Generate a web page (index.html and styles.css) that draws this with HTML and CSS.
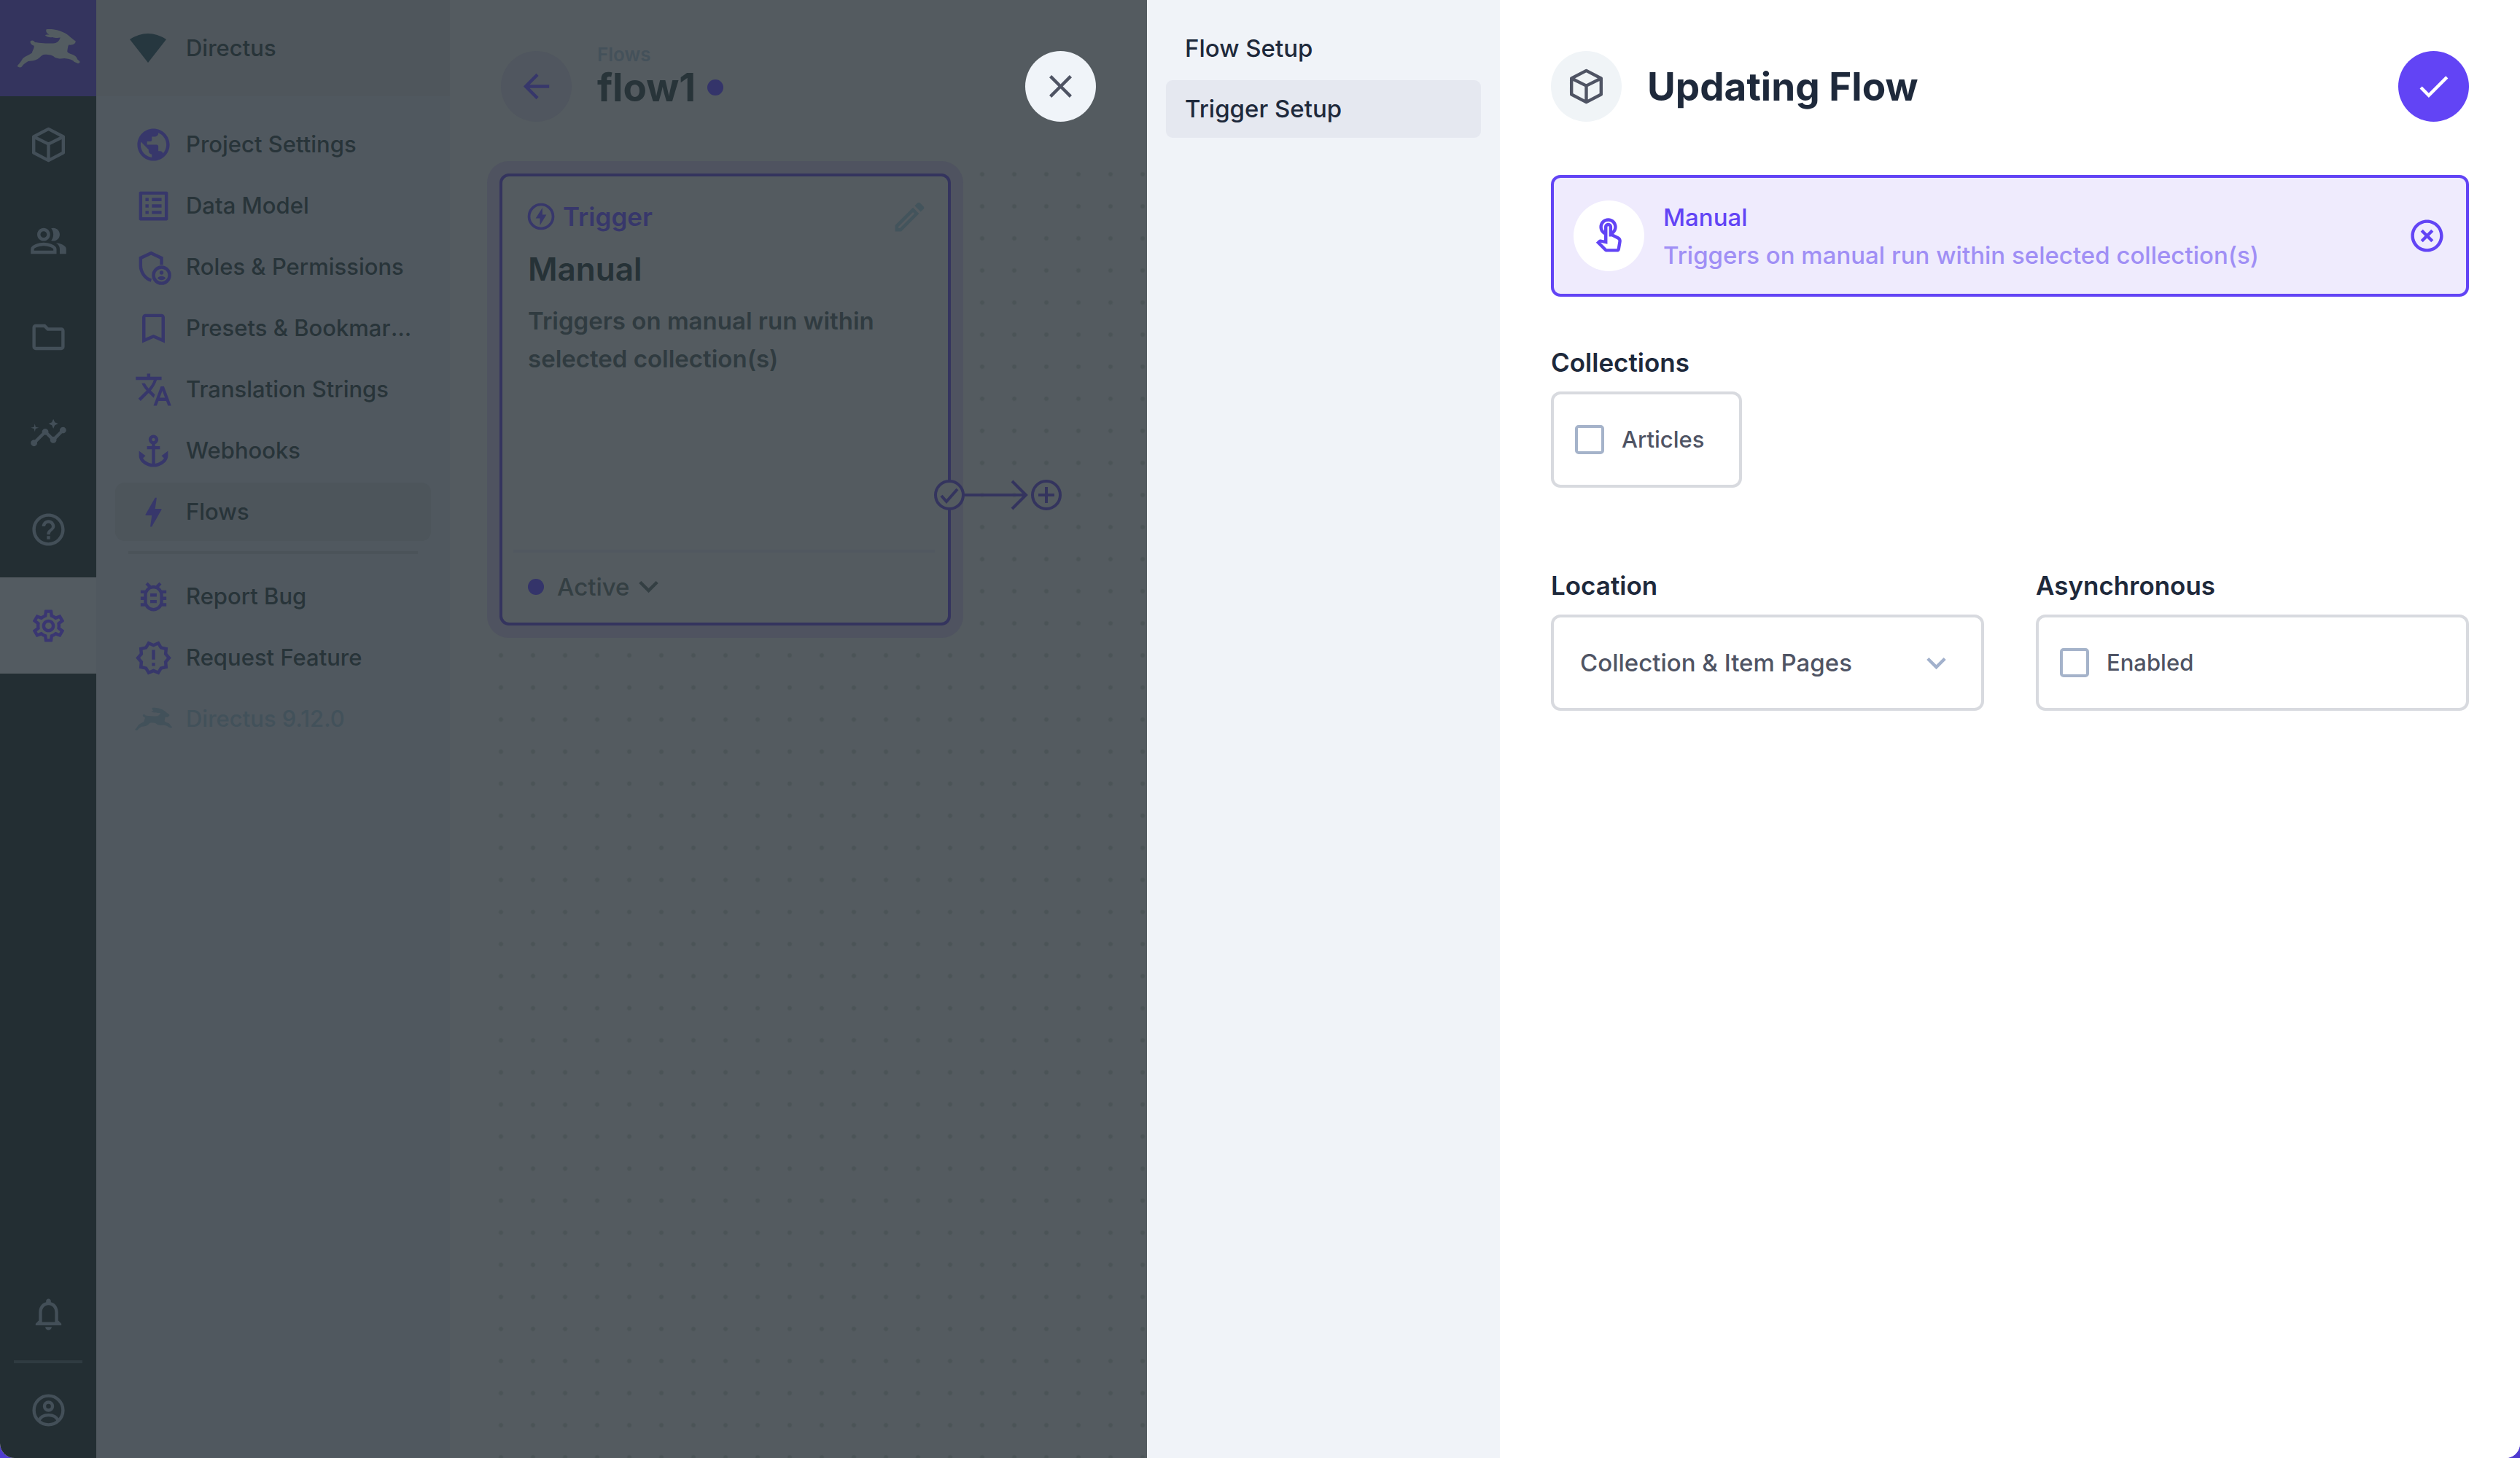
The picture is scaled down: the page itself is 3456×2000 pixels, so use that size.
FILE: index.html
```html
<!DOCTYPE html>
<html lang="en">
<head>
<meta charset="utf-8">
<title>Updating Flow</title>
<link rel="stylesheet" href="styles.css">
</head>
<body>
<svg class="sprite" aria-hidden="true">
  <symbol id="rabbit" viewBox="20 44 272 166"><path d="M147 48C165 44 200 50 222 62C245 75 250 85 268 96C270 106 258 114 240 112C236 118 236 125 234 137C232 142 238 146 248 150C262 154 272 160 276 172L285 180C288 186 282 190 276 188L262 182C252 170 235 171 222 168C208 170 195 170 182 164C172 154 158 153 142 152C132 152 126 158 120 164C108 176 90 178 72 180C58 188 50 195 46 202C42 208 28 206 27 199C38 188 44 178 50 168C62 158 78 152 88 145C90 135 98 125 96 116C84 112 78 102 82 96C88 91 96 94 100 101C120 104 150 106 175 106C190 106 200 98 205 82C196 84 182 84 172 80C162 82 148 80 142 72C146 68 152 70 160 70C150 66 144 58 147 48Z"/></symbol>
  <symbol id="box" viewBox="0 0 24 24"><path d="M12 2.2 21.2 7v10L12 21.8 2.8 17V7zM2.8 7 12 11.6 21.2 7M12 11.6v10.2" fill="none" stroke="currentColor" stroke-width="2" stroke-linejoin="round"/></symbol>
  <symbol id="expand" viewBox="0 0 24 24"><path d="M7.41 8.59 12 13.17l4.59-4.58L18 10l-6 6-6-6z"/></symbol>
</svg>
<div class="app">
  <nav class="modules" aria-label="Modules">
    <a class="module logo" href="#" aria-label="Directus"><svg><use href="#rabbit"/></svg></a>
    <a class="module" href="#" aria-label="Content"><svg class="icon"><use href="#box"/></svg></a>
    <a class="module" href="#" aria-label="Users"><svg class="icon" viewBox="0 0 24 24"><path d="M16.67 13.13C18.04 14.06 19 15.32 19 17v3h4v-3c0-2.18-3.57-3.47-6.33-3.87zM15 12c2.21 0 4-1.79 4-4s-1.79-4-4-4c-.47 0-.91.1-1.33.24C14.5 5.27 15 6.58 15 8s-.5 2.73-1.33 3.76c.42.14.86.24 1.33.24zM9 12c2.21 0 4-1.79 4-4s-1.79-4-4-4-4 1.79-4 4 1.79 4 4 4zm0-6c1.1 0 2 .9 2 2s-.9 2-2 2-2-.9-2-2 .9-2 2-2zm0 7c-2.67 0-8 1.34-8 4v3h16v-3c0-2.66-5.33-4-8-4zm6 5H3v-.99C3.2 16.29 6.3 15 9 15s5.8 1.29 6 2v1z"/></svg></a>
    <a class="module" href="#" aria-label="Files"><svg class="icon" viewBox="0 0 24 24"><path d="M9.17 6l2 2H20v10H4V6h5.17M10 4H4c-1.1 0-1.99.9-1.99 2L2 18c0 1.1.9 2 2 2h16c1.1 0 2-.9 2-2V8c0-1.1-.9-2-2-2h-8l-2-2z"/></svg></a>
    <a class="module" href="#" aria-label="Insights"><svg class="icon" viewBox="0 0 24 24"><path d="M21 8c-1.45 0-2.26 1.44-1.93 2.51l-3.55 3.56c-.3-.09-.74-.09-1.04 0l-2.55-2.55C12.27 10.45 11.46 9 10 9c-1.45 0-2.27 1.44-1.93 2.52l-4.56 4.55C2.44 15.74 1 16.55 1 18c0 1.1.9 2 2 2 1.45 0 2.26-1.44 1.93-2.51l4.55-4.56c.3.09.74.09 1.04 0l2.55 2.55C12.73 16.55 13.54 18 15 18c1.45 0 2.27-1.44 1.93-2.52l3.56-3.55C21.56 12.26 23 11.45 23 10c0-1.1-.9-2-2-2zM15 9l.94-2.07L18 6l-2.06-.93L15 3l-.92 2.07L12 6l2.08.93zM3.5 11L4 9l2-.5L4 8l-.5-2L3 8l-2 .5L3 9z"/></svg></a>
    <a class="module" href="#" aria-label="Documentation"><svg class="icon" viewBox="0 0 24 24"><path d="M11 18h2v-2h-2v2zm1-16C6.48 2 2 6.48 2 12s4.48 10 10 10 10-4.48 10-10S17.52 2 12 2zm0 18c-4.41 0-8-3.59-8-8s3.59-8 8-8 8 3.59 8 8-3.59 8-8 8zm0-14c-2.21 0-4 1.79-4 4h2c0-1.1.9-2 2-2s2 .9 2 2c0 2-3 1.75-3 5h2c0-2.25 3-2.5 3-5 0-2.21-1.79-4-4-4z"/></svg></a>
    <a class="module current" href="#" aria-label="Settings"><svg class="icon" viewBox="0 0 24 24"><path d="M19.43 12.98c.04-.32.07-.64.07-.98s-.03-.66-.07-.98l2.11-1.65c.19-.15.24-.42.12-.64l-2-3.46c-.09-.16-.26-.25-.44-.25-.06 0-.12.01-.17.03l-2.49 1c-.52-.4-1.08-.73-1.69-.98l-.38-2.65C14.46 2.18 14.25 2 14 2h-4c-.25 0-.46.18-.49.42l-.38 2.65c-.61.25-1.17.59-1.69.98l-2.49-1c-.06-.02-.12-.03-.18-.03-.17 0-.34.09-.43.25l-2 3.46c-.13.22-.07.49.12.64l2.11 1.65c-.04.32-.07.65-.07.98s.03.66.07.98l-2.11 1.65c-.19.15-.24.42-.12.64l2 3.46c.09.16.26.25.44.25.06 0 .12-.01.17-.03l2.49-1c.52.4 1.08.73 1.69.98l.38 2.65c.03.24.24.42.49.42h4c.25 0 .46-.18.49-.42l.38-2.65c.61-.25 1.17-.59 1.69-.98l2.49 1c.06.02.12.03.18.03.17 0 .34-.09.43-.25l2-3.46c.12-.22.07-.49-.12-.64l-2.11-1.65zm-1.98-1.71c.04.31.05.52.05.73 0 .21-.02.43-.05.73l-.14 1.13.89.7 1.08.84-.7 1.21-1.27-.51-1.04-.42-.9.68c-.43.32-.84.56-1.25.73l-1.06.43-.16 1.13-.2 1.35h-1.4l-.19-1.35-.16-1.13-1.06-.43c-.43-.18-.83-.41-1.23-.71l-.91-.7-1.06.43-1.27.51-.7-1.21 1.08-.84.89-.7-.14-1.13c-.03-.31-.05-.54-.05-.74s.02-.43.05-.73l.14-1.13-.89-.7-1.08-.84.7-1.21 1.27.51 1.04.42.9-.68c.43-.32.84-.56 1.25-.73l1.06-.43.16-1.13.2-1.35h1.39l.19 1.35.16 1.13 1.06.43c.43.18.83.41 1.23.71l.91.7 1.06-.43 1.27-.51.7 1.21-1.07.85-.89.7.14 1.13zM12 8c-2.21 0-4 1.79-4 4s1.79 4 4 4 4-1.79 4-4-1.79-4-4-4zm0 6c-1.1 0-2-.9-2-2s.9-2 2-2 2 .9 2 2-.9 2-2 2z"/></svg></a>
    <button class="module bottom" type="button" aria-label="Notifications"><svg class="icon" viewBox="0 0 24 24"><path d="M12 22c1.1 0 2-.9 2-2h-4c0 1.1.9 2 2 2zm6-6v-5c0-3.07-1.63-5.64-4.5-6.32V4c0-.83-.67-1.5-1.5-1.5s-1.5.67-1.5 1.5v.68C7.64 5.36 6 7.92 6 11v5l-2 2v1h16v-1l-2-2zm-2 1H8v-6c0-2.48 1.51-4.5 4-4.5s4 2.02 4 4.5v6z"/></svg></button>
    <hr class="module-rule">
    <a class="module" href="#" aria-label="Account"><svg class="icon" viewBox="0 0 24 24"><g fill="none" stroke="currentColor" stroke-width="2"><circle cx="12" cy="12" r="9"/><circle cx="12" cy="9.5" r="2.5"/><path d="M6 18.5c1-2.4 3.3-3.5 6-3.5s5 1.1 6 3.5"/></g></svg></a>
  </nav>

  <nav class="settings" aria-label="Settings">
    <header class="project">
      <svg class="project-logo" viewBox="0 0 52 40"><path d="M1 8Q26-8 51 8L26 40z"/></svg>
      <span>Directus</span>
    </header>
    <div class="links">
      <a class="link" href="#"><svg class="icon" viewBox="0 0 24 24"><path d="M12 2C6.48 2 2 6.48 2 12s4.48 10 10 10 10-4.48 10-10S17.52 2 12 2zM4 12c0-.61.08-1.21.21-1.78L8.99 15v1c0 1.1.9 2 2 2v1.93C7.06 19.43 4 16.07 4 12zm13.89 5.4c-.26-.81-1-1.4-1.9-1.4h-1v-3c0-.55-.45-1-1-1h-6v-2h2c.55 0 1-.45 1-1V7h2c1.1 0 2-.9 2-2v-.41C17.92 5.77 20 8.65 20 12c0 2.08-.81 3.98-2.11 5.4z"/></svg><span>Project Settings</span></a>
      <a class="link" href="#"><svg class="icon" viewBox="0 0 24 24"><path d="M11 7h6v2h-6zm0 4h6v2h-6zm0 4h6v2h-6zM7 7h2v2H7zm0 4h2v2H7zm0 4h2v2H7zM20.1 3H3.9c-.5 0-.9.4-.9.9v16.2c0 .4.4.9.9.9h16.2c.4 0 .9-.5.9-.9V3.9c0-.5-.5-.9-.9-.9zM19 19H5V5h14v14z"/></svg><span>Data Model</span></a>
      <a class="link" href="#"><svg class="icon" viewBox="0 0 24 24"><g fill="none" stroke="currentColor" stroke-width="2"><path d="M17 10.5V6.3L10.5 3.3 4 6.3v4.6c0 4.3 2.8 8.2 6.6 9.3"/><circle cx="17" cy="17" r="5"/></g><circle cx="17" cy="15.4" r="1.2"/><path d="M14.5 18.8c.5-.9 1.5-1.3 2.5-1.3s2 .4 2.5 1.3c-.6.8-1.5 1.2-2.5 1.2s-1.9-.4-2.5-1.2z"/></svg><span>Roles &amp; Permissions</span></a>
      <a class="link" href="#"><svg class="icon" viewBox="0 0 24 24"><path d="M17 3H7c-1.1 0-1.99.9-1.99 2L5 21l7-3 7 3V5c0-1.1-.9-2-2-2zm0 15l-5-2.18L7 18V5h10v13z"/></svg><span>Presets &amp; Bookmarks</span></a>
      <a class="link" href="#"><svg class="icon" viewBox="0 0 24 24"><path d="M12.87 15.07l-2.54-2.51.03-.03c1.74-1.94 2.98-4.17 3.71-6.53H17V4h-7V2H8v2H1v1.99h11.17C11.5 7.92 10.44 9.75 9 11.35 8.07 10.32 7.3 9.19 6.69 8h-2c.73 1.63 1.73 3.17 2.98 4.56l-5.09 5.02L4 19l5-5 3.11 3.11.76-2.04zM18.5 10h-2L12 22h2l1.12-3h4.75L21 22h2l-4.5-12zm-2.62 7l1.62-4.33L19.12 17h-3.24z"/></svg><span>Translation Strings</span></a>
      <a class="link" href="#"><svg class="icon" viewBox="0 0 24 24"><path d="M17 15l1.55 1.55c-.96 1.69-3.33 3.04-5.55 3.37V11h3V9h-3V7.82C14.16 7.4 15 6.3 15 5c0-1.65-1.35-3-3-3S9 3.35 9 5c0 1.3.84 2.4 2 2.82V9H8v2h3v8.92c-2.22-.33-4.59-1.68-5.55-3.37L7 15l-4-3v3c0 3.88 4.92 7 9 7s9-3.12 9-7v-3l-4 3zM12 4c.55 0 1 .45 1 1s-.45 1-1 1-1-.45-1-1 .45-1 1-1z"/></svg><span>Webhooks</span></a>
      <a class="link active" href="#"><svg class="icon" viewBox="0 0 24 24"><path d="M11 21h-1l1-7H7.5c-.58 0-.57-.32-.38-.66C8.48 10.94 10.42 7.54 13 3h1l-1 7h3.5c.49 0 .56.33.47.51l-.07.15C12.96 17.55 11 21 11 21z"/></svg><span>Flows</span></a>
    </div>
    <hr class="rule">
    <div class="links">
      <a class="link" href="#"><svg class="icon" viewBox="0 0 24 24"><path d="M20 8h-2.81c-.45-.78-1.07-1.45-1.82-1.96L17 4.41 15.59 3l-2.17 2.17C12.96 5.06 12.49 5 12 5c-.49 0-.96.06-1.41.17L8.41 3 7 4.41l1.62 1.63C7.88 6.55 7.26 7.22 6.81 8H4v2h2.09c-.05.33-.09.66-.09 1v1H4v2h2v1c0 .34.04.67.09 1H4v2h2.81c1.04 1.79 2.97 3 5.19 3s4.15-1.21 5.19-3H20v-2h-2.09c.05-.33.09-.66.09-1v-1h2v-2h-2v-1c0-.34-.04-.67-.09-1H20V8zm-4 4v3c0 .22-.03.47-.07.7l-.1.65-.37.65c-.72 1.24-2.04 2-3.46 2s-2.74-.77-3.46-2l-.37-.64-.1-.65C8.03 15.48 8 15.23 8 15v-4c0-.23.03-.48.07-.7l.1-.65.37-.65c.3-.52.72-.97 1.21-1.31l.57-.39.74-.18c.31-.08.63-.12.94-.12.32 0 .63.04.95.12l.68.16.61.42c.5.34.91.78 1.21 1.31l.38.65.1.65c.04.22.07.48.07.69v1zm-6 2h4v2h-4zm0-4h4v2h-4z"/></svg><span>Report Bug</span></a>
      <a class="link" href="#"><svg class="icon" viewBox="0 0 24 24"><path d="M23 12l-2.44-2.78.34-3.68-3.61-.82-1.89-3.18L12 3 8.6 1.54 6.71 4.72l-3.61.81.34 3.68L1 12l2.44 2.78-.34 3.69 3.61.82 1.89 3.18L12 21l3.4 1.46 1.89-3.18 3.61-.82-.34-3.68L23 12zm-4.51 2.11l.26 2.79-2.74.62-1.43 2.41L12 18.82l-2.58 1.11-1.43-2.41-2.74-.62.26-2.8L3.66 12l1.85-2.12-.26-2.78 2.74-.61 1.43-2.41L12 5.18l2.58-1.11 1.43 2.41 2.74.62-.26 2.79L20.34 12l-1.85 2.11zM11 15h2v2h-2zm0-8h2v6h-2z"/></svg><span>Request Feature</span></a>
      <a class="link version" href="#"><svg class="icon"><use href="#rabbit"/></svg><span>Directus 9.12.0</span></a>
    </div>
  </nav>

  <main class="main">
    <header class="main-header">
      <button class="round back" type="button" aria-label="Back"><svg class="icon" viewBox="0 0 24 24"><path d="M20 11H7.83l5.59-5.59L12 4l-8 8 8 8 1.41-1.41L7.83 13H20v-2z"/></svg></button>
      <div class="heading">
        <a class="crumb" href="#">Flows</a>
        <h1 class="title">flow1 <i class="dot"></i></h1>
      </div>
      <button class="round close" type="button" aria-label="Close"><svg class="icon" viewBox="0 0 24 24"><path d="M19 6.41L17.59 5 12 10.59 6.41 5 5 6.41 10.59 12 5 17.59 6.41 19 12 13.41 17.59 19 19 17.59 13.41 12z"/></svg></button>
    </header>
    <div class="canvas">
      <section class="panel">
        <div class="panel-top">
          <svg class="icon small" viewBox="0 0 24 24"><circle cx="12" cy="12" r="9" fill="none" stroke="currentColor" stroke-width="2"/><path d="M13 5.5l-5 7.8h3.2v5.2l4.8-7.8H13z"/></svg>
          <span>Trigger</span>
          <button class="edit" type="button" aria-label="Edit"><svg class="icon" viewBox="0 0 24 24"><path d="M14.06 9.02l.92.92L5.92 19H5v-.92l9.06-9.06M17.66 3c-.25 0-.51.1-.7.29l-1.83 1.83 3.75 3.75 1.83-1.83c.39-.39.39-1.02 0-1.41l-2.34-2.34c-.2-.2-.45-.29-.71-.29zm-3.6 3.19L3 17.25V21h3.75L17.81 9.94l-3.75-3.75z"/></svg></button>
        </div>
        <h2 class="panel-name">Manual</h2>
        <p class="panel-text">Triggers on manual run within selected collection(s)</p>
        <footer class="panel-foot">
          <button class="status" type="button"><i class="dot"></i><span>Active</span><svg class="icon"><use href="#expand"/></svg></button>
        </footer>
      </section>
      <svg class="wire" viewBox="0 0 190 52" aria-hidden="true">
        <circle cx="26" cy="26" r="19"/><path d="M15 27l7 8 15-17"/>
        <path d="M45 26h86M112 7l19 19-19 19"/>
        <circle cx="159" cy="26" r="19"/><path d="M148 26h22M159 15v22"/>
      </svg>
    </div>
  </main>

  <nav class="tabs" aria-label="Setup">
    <a class="tab" href="#">Flow Setup</a>
    <a class="tab active" href="#">Trigger Setup</a>
  </nav>

  <form class="drawer">
    <header class="drawer-header">
      <span class="round badge"><svg class="icon"><use href="#box"/></svg></span>
      <h2 class="title">Updating Flow</h2>
      <button class="round save" type="button" aria-label="Save"><svg class="icon" viewBox="0 0 24 24"><path d="M9 16.17L4.83 12l-1.42 1.41L9 19 21 7l-1.41-1.41z"/></svg></button>
    </header>
    <section class="trigger">
      <span class="round trigger-icon"><svg class="icon" viewBox="0 0 24 24"><path d="M18.19 12.44l-3.24-1.62c1.29-1 2.12-2.56 2.12-4.32 0-3.03-2.47-5.5-5.5-5.5s-5.5 2.47-5.5 5.5c0 2.13 1.22 3.98 3 4.89v3.26c-2.15-.46-2.02-.44-2.26-.44-.53 0-1.03.21-1.41.59L4 16.22l5.09 5.09c.43.44 1.03.69 1.65.69h6.3c.98 0 1.81-.7 1.97-1.67l.8-4.71c.22-1.3-.43-2.58-1.62-3.18zm-.35 2.85l-.8 4.71h-6.3c-.09 0-.17-.04-.24-.1l-3.68-3.68 4.25.89V6.5c0-.28.22-.5.5-.5s.5.22.5.5v6h1.76l3.46 1.73c.4.2.62.63.55 1.06zM8.07 6.5c0-1.93 1.57-3.5 3.5-3.5s3.5 1.57 3.5 3.5c0 .95-.38 1.81-1 2.44V6.5c0-1.38-1.12-2.5-2.5-2.5s-2.5 1.12-2.5 2.5v2.44c-.62-.63-1-1.49-1-2.44z"/></svg></span>
      <div class="trigger-text">
        <p>Manual</p>
        <p class="sub">Triggers on manual run within selected collection(s)</p>
      </div>
      <button class="clear" type="button" aria-label="Remove trigger"><svg class="icon" viewBox="0 0 24 24"><path d="M14.59 8L12 10.59 9.41 8 8 9.41 10.59 12 8 14.59 9.41 16 12 13.41 14.59 16 16 14.59 13.41 12 16 9.41 14.59 8zM12 2C6.47 2 2 6.47 2 12s4.47 10 10 10 10-4.47 10-10S17.53 2 12 2zm0 18c-4.41 0-8-3.59-8-8s3.59-8 8-8 8 3.59 8 8-3.59 8-8 8z"/></svg></button>
    </section>
    <fieldset class="field collections">
      <legend class="label">Collections</legend>
      <label class="control check"><input type="checkbox"><span>Articles</span></label>
    </fieldset>
    <div class="columns">
      <div class="field">
        <label class="label" for="location">Location</label>
        <div class="select">
          <select class="control" id="location"><option>Collection &amp; Item Pages</option></select>
          <svg class="icon"><use href="#expand"/></svg>
        </div>
      </div>
      <fieldset class="field">
        <legend class="label">Asynchronous</legend>
        <label class="control check"><input type="checkbox"><span>Enabled</span></label>
      </fieldset>
    </div>
  </form>
</div>
</body>
</html>
```
FILE: styles.css
```css
:root {
  --purple: #6244f5;
  --dim-purple: #34345e;
  --dim-page: #545b60;
  --dim-nav: #50585f;
  --dim-text: #283439;
  --ink: #1e293b;
  --line: #d8dadf;
}

* { box-sizing: border-box; }

body {
  margin: 0;
  background: #4f3bd0;
  font: 500 31px/44px Inter, "Liberation Sans", sans-serif;
}

h1, h2, p, fieldset, legend { margin: 0; padding: 0; }
fieldset { border: 0; min-width: 0; }
a { color: inherit; text-decoration: none; }
button { border: 0; padding: 0; background: none; color: inherit; font: inherit; cursor: pointer; }
svg { display: block; fill: currentColor; }

.sprite { position: absolute; width: 0; height: 0; }
.icon { flex: none; width: 53px; height: 53px; }
.icon.small { width: 44px; height: 44px; }

.app {
  display: grid;
  grid-template-columns: 132px 485px minmax(0, 956fr) 484px minmax(0, 1399fr);
  min-height: 100vh;
  border-radius: 0 0 20px 20px;
  overflow: hidden;
  background: #fff;
}

/* Module bar */
.modules {
  display: flex;
  flex-direction: column;
  background: #232e33;
  color: #434f58;
}
.module {
  display: flex;
  align-items: center;
  justify-content: center;
  width: 132px;
  height: 132px;
}
.module.logo { background: var(--dim-purple); color: #535c61; }
.module.logo svg { width: 91px; height: 55px; }
.module.current { background: #535b61; color: #3a3672; }
.module.bottom { margin-top: auto; }
.module-rule { width: 94px; height: 4px; margin: -2px auto; border: 0; background: #2f3b41; }

/* Settings navigation */
.settings { background: var(--dim-nav); color: var(--dim-text); }
.project {
  display: flex;
  align-items: center;
  gap: 26px;
  height: 132px;
  padding-left: 45px;
  background: #4f565c;
}
.project-logo { width: 52px; height: 40px; color: #26373f; }
.links { display: grid; grid-template-columns: minmax(0, 1fr); gap: 4px; padding: 26px 26px 0; }
.link {
  display: flex;
  align-items: center;
  gap: 18px;
  height: 80px;
  padding: 0 26px;
  border-radius: 13px;
}
.link .icon { color: #37376b; }
.link span { overflow: hidden; text-overflow: ellipsis; white-space: nowrap; }
.link.active { background: #4d555b; }
.link.version, .link.version .icon { color: #42515a; }
.rule { height: 4px; margin: 14px 44px -8px; border: 0; background: #4b5359; }

/* Flow editor */
.main { display: flex; flex-direction: column; background: var(--dim-page); color: var(--dim-text); }
.main-header {
  display: flex;
  align-items: center;
  gap: 35px;
  height: 217px;
  padding: 20px 70px 0;
}
.round {
  display: flex;
  flex: none;
  align-items: center;
  justify-content: center;
  width: 97px;
  height: 97px;
  border-radius: 50%;
}
.back { background: #50565f; color: #37376b; }
.close { margin-left: auto; background: #f0f4f9; color: #4f5464; }
.crumb { display: block; font-size: 26px; font-weight: 600; line-height: 26px; color: #44515a; }
.title { font-size: 53px; font-weight: 700; line-height: 64px; }
.heading { padding-bottom: 24px; }
.main .title { display: flex; align-items: center; gap: 16px; }
.dot { width: 22px; height: 22px; border-radius: 50%; background: #34346a; }

.canvas {
  position: relative;
  flex: 1;
  margin-left: 48px;
  background: radial-gradient(circle at 22px 22px, #4b5457 2px, transparent 4px) 0 0 / 44px 44px;
}
.panel {
  position: absolute;
  top: 21px;
  left: 20px;
  display: flex;
  flex-direction: column;
  width: 619px;
  height: 620px;
  padding: 33px 26px 0 35px;
  border: 4px solid var(--dim-purple);
  border-radius: 13px;
  background: var(--dim-page);
  box-shadow: 0 0 0 17px #4f5360;
}
.panel-top {
  display: flex;
  align-items: center;
  gap: 8px;
  height: 44px;
  margin-left: -4px;
  font-size: 35px;
  font-weight: 600;
  color: #37376b;
}
.edit { margin-left: auto; color: #43545c; }
.panel-name { margin-top: 24px; font-size: 44px; font-weight: 600; line-height: 53px; color: #263237; }
.panel-text { margin-top: 18px; font-size: 33px; font-weight: 600; line-height: 52px; color: #303b40; }
.panel-foot {
  margin: auto -8px 0 -20px;
  padding: 20px 20px 23px;
  border-top: 4px solid #515860;
  font-size: 33px;
  color: #343f43;
}
.status { display: flex; align-items: center; gap: 18px; }
.status .icon { margin-left: -18px; }
.wire {
  position: absolute;
  top: 436px;
  left: 611px;
  width: 190px;
  height: 52px;
  fill: none;
  stroke: var(--dim-purple);
  stroke-width: 4;
}
.wire circle { fill: var(--dim-page); }

/* Drawer */
.tabs {
  display: flex;
  flex-direction: column;
  gap: 4px;
  padding: 27px 26px;
  background: #f0f3f8;
  color: var(--ink);
}
.tab { padding: 17px 26px 18px; border-radius: 9px; font-size: 33px; }
.tab.active { background: #e5e8f0; }

.drawer { min-width: 0; padding: 70px; background: #fff; color: #4f5464; }
.drawer-header { display: flex; align-items: center; gap: 35px; color: var(--ink); }
.badge { background: #f0f4f7; color: #4f5464; }
.save { margin-left: auto; background: var(--purple); color: #fff; }
.trigger {
  display: flex;
  align-items: center;
  gap: 26px;
  height: 167px;
  margin-top: 73px;
  padding: 0 27px;
  border: 4px solid var(--purple);
  border-radius: 13px;
  background: #efebfd;
  color: var(--purple);
}
.trigger-icon { background: #fff; }
.trigger-text { flex: 1; font-size: 33px; line-height: 52px; }
.sub { color: #a08ff5; }

.label { display: block; margin-bottom: 18px; font-size: 35px; font-weight: 600; color: var(--ink); }
.control {
  width: 100%;
  height: 132px;
  border: 4px solid var(--line);
  border-radius: 13px;
  background: #fff;
  color: #4f5464;
}
.collections { margin-top: 68px; }
.collections .check { width: fit-content; padding-right: 48px; }
.check { display: flex; align-items: center; gap: 24px; padding-left: 29px; }
.check input {
  appearance: none;
  width: 40px;
  height: 40px;
  margin: 0;
  border: 4px solid #a5b3ca;
  border-radius: 5px;
}
.columns { display: grid; grid-template-columns: 1fr 1fr; gap: 71px; margin-top: 112px; }
.select { position: relative; }
.select select { appearance: none; padding: 0 36px; font: inherit; font-size: 33px; }
.select .icon { position: absolute; top: 40px; right: 39px; color: #a2b1cc; pointer-events: none; }
```
